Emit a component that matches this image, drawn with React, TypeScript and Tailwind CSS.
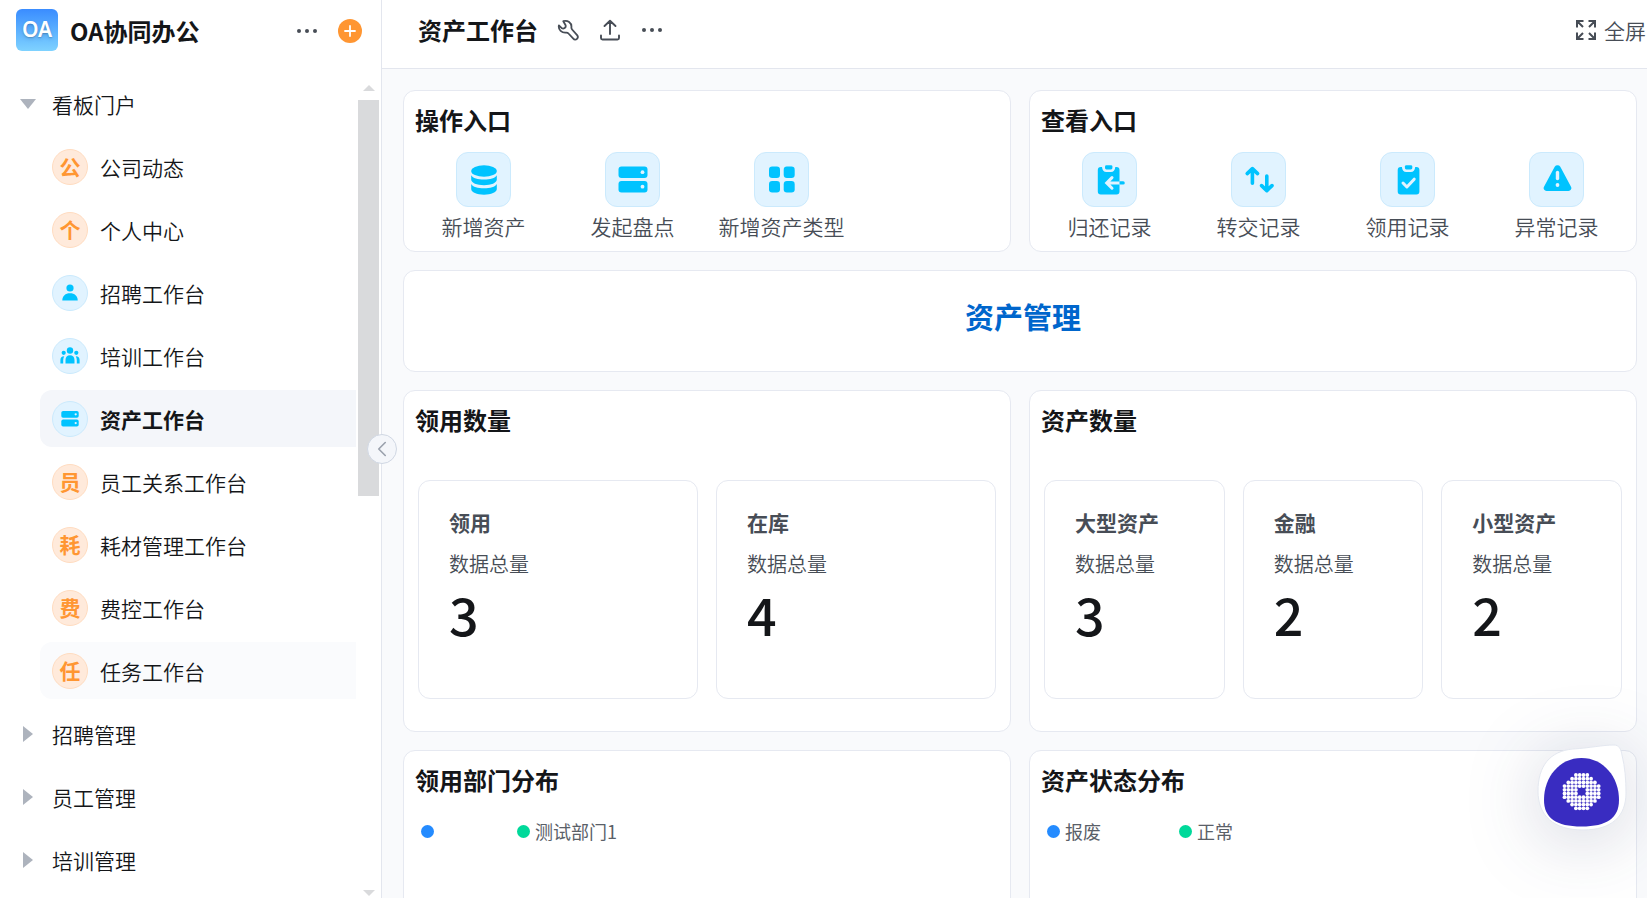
import React from 'react';
import { ChevronLeft } from 'lucide-react';

type IconProps = { className?: string };

const DatabaseIcon = ({ className }: IconProps) => (
  <svg viewBox="0 0 30 30" className={className} fill="currentColor" aria-hidden="true">
    <ellipse cx="15" cy="6" rx="12.8" ry="5.8" />
    <path d="M2.200 10.200c1.600 2.900 6.600 4.400 12.800 4.400s11.200-1.500 12.800-4.400v4.400c0 3.400-5.700 5.700-12.800 5.700S2.200 18 2.200 14.600z" />
    <path d="M2.200 18.900c1.600 2.900 6.600 4.400 12.800 4.400s11.200-1.500 12.800-4.400V24c0 3.400-5.700 5.700-12.800 5.700S2.200 27.400 2.200 24z" />
  </svg>
);

const ServerIcon = ({ className }: IconProps) => (
  <svg viewBox="0 0 30 30" className={className} aria-hidden="true">
    <rect x="0.500" y="1.500" width="29" height="11.500" rx="3" fill="currentColor" />
    <rect x="0.500" y="16" width="29" height="11.500" rx="3" fill="currentColor" />
    <circle cx="24.500" cy="7.200" r="1.900" fill="#e1f3ff" />
    <circle cx="24.500" cy="21.700" r="1.900" fill="#e1f3ff" />
  </svg>
);

const GridIcon = ({ className }: IconProps) => (
  <svg viewBox="0 0 30 30" className={className} fill="currentColor" aria-hidden="true">
    <rect x="2" y="1.500" width="11" height="11.500" rx="3.200" />
    <rect x="16.700" y="1.500" width="11" height="11.500" rx="3.200" />
    <rect x="2" y="16" width="11" height="11.500" rx="3.200" />
    <rect x="16.700" y="16" width="11" height="11.500" rx="3.200" />
  </svg>
);

const ReturnIcon = ({ className }: IconProps) => (
  <svg viewBox="0 0 30 30" className={className} aria-hidden="true">
    <path d="M5.800 2h1.200c.4 3.400 1.800 5 4.300 5h4.700c2.500 0 3.900-1.600 4.300-5h1.200a3 3 0 0 1 3 3v21.500a3 3 0 0 1-3 3H5.800a3 3 0 0 1-3-3V5a3 3 0 0 1 3-3z" fill="currentColor" />
    <rect x="10" y="0.200" width="7.400" height="4.200" rx="1.400" fill="currentColor" />
    <path d="M17 12.600l-5.300 5.300 5.300 5.300M12 17.900h12.500" fill="none" stroke="#e1f3ff" strokeWidth="3" strokeLinecap="round" />
    <path d="M24.500 16.200h3.600a1.700 1.700 0 0 1 0 3.400h-3.600z" fill="currentColor" />
  </svg>
);

const TransferIcon = ({ className }: IconProps) => (
  <svg viewBox="0 0 30 30" className={className} fill="none" stroke="currentColor" strokeWidth="3.600" strokeLinecap="round" strokeLinejoin="round" aria-hidden="true">
    <path d="M8.400 18.200V4M3.200 8.600l5.200-5 5.200 5" />
    <path d="M22.800 11v14M17.600 20.600l5.200 5 5.200-5" />
  </svg>
);

const ClaimIcon = ({ className }: IconProps) => (
  <svg viewBox="0 0 30 30" className={className} aria-hidden="true">
    <path d="M7.700 2h1.200c.4 3.400 1.800 5 4.300 5h4.700c2.500 0 3.900-1.600 4.300-5h1.200a3 3 0 0 1 3 3v21.500a3 3 0 0 1-3 3H7.700a3 3 0 0 1-3-3V5a3 3 0 0 1 3-3z" fill="currentColor" />
    <rect x="11.900" y="0.200" width="7.400" height="4.200" rx="1.400" fill="currentColor" />
    <path d="M10 18l3.900 4 7.300-7.800" fill="none" stroke="#e1f3ff" strokeWidth="3" strokeLinecap="round" strokeLinejoin="round" />
  </svg>
);

const WarningIcon = ({ className }: IconProps) => (
  <svg viewBox="0 0 30 30" className={className} aria-hidden="true">
    <path d="M12.700 1.700a3.400 3.400 0 0 1 5.600 0l10.700 20a2.900 2.900 0 0 1-2.500 4.300H4.500a2.900 2.900 0 0 1-2.500-4.300z" fill="currentColor" />
    <path d="M15.500 7.500v6" stroke="#e1f3ff" strokeWidth="3.400" strokeLinecap="round" />
    <circle cx="15.500" cy="20" r="1.900" fill="#e1f3ff" />
  </svg>
);

const PersonIcon = ({ className }: IconProps) => (
  <svg viewBox="0 0 20 20" className={className} fill="currentColor" aria-hidden="true">
    <circle cx="10" cy="5" r="3.600" />
    <path d="M2.300 17.500c0-4.500 3.100-7.200 7.700-7.200s7.700 2.700 7.700 7.200z" />
  </svg>
);

const PeopleIcon = ({ className }: IconProps) => (
  <svg viewBox="0 0 20 20" className={className} fill="currentColor" aria-hidden="true">
    <circle cx="10" cy="4.500" r="3.200" />
    <circle cx="3.700" cy="6.800" r="2.100" />
    <circle cx="16.300" cy="6.800" r="2.100" />
    <path d="M5.500 17.500V14c0-3 1.700-4.800 4.500-4.800s4.500 1.800 4.500 4.800v3.500z" />
    <path d="M.4 17.500V14c0-2.200 1.200-3.700 3.800-3.700-.7 1.200-1 2.500-1 4v3.200zM19.600 17.500V14c0-2.200-1.200-3.700-3.800-3.700.7 1.200 1 2.500 1 4v3.200z" />
  </svg>
);

const WrenchIcon = () => (
  <svg viewBox="0 0 22 22" className="size-[22px]" fill="none" stroke="currentColor" strokeWidth="1.800" strokeLinejoin="round" strokeLinecap="round" aria-hidden="true">
    <path d="M6.300 2.200C10.500.8 14.900 3.800 14.400 8.200c-.1 1 .1 1.600.7 2.300l5 5.600c1 1.200.9 2.700-.1 3.700-1.100 1.100-2.700 1.100-3.700-.1l-4.800-5.200c-.7-.8-1.400-1-2.500-.9C5 14 1 11 1.900 6.400L5 9.300c1.600 1 4.300-.8 3.600-3z" />
  </svg>
);

const UploadIcon = () => (
  <svg viewBox="0 0 22 22" className="size-[22px]" fill="none" stroke="currentColor" strokeWidth="1.900" strokeLinecap="round" strokeLinejoin="round" aria-hidden="true">
    <path d="M11 15V2M5.500 7L11 1.700 16.500 7M2 16.500v2.500a1.500 1.500 0 0 0 1.500 1.500h15a1.500 1.500 0 0 0 1.500-1.500v-2.500" />
  </svg>
);

const DotsIcon = () => (
  <svg viewBox="0 0 22 22" className="size-[22px]" fill="currentColor" aria-hidden="true">
    <circle cx="3" cy="11" r="2" />
    <circle cx="11" cy="11" r="2" />
    <circle cx="19" cy="11" r="2" />
  </svg>
);

const FullscreenIcon = () => (
  <svg viewBox="0 0 20 20" className="size-5" fill="none" stroke="currentColor" strokeWidth="2" aria-hidden="true">
    <path d="M1 7.500V1h6.500M1.500 1.500l5.500 5.500M12.500 1H19v6.500M18.500 1.500L13 7M1 12.500V19h6.500M1.500 18.500L7 13M12.500 19H19v-6.500M18.500 18.500L13 13" />
  </svg>
);

// dot rows of the ring inside the assistant bubble, as [first, last] column
const dotRows = [[3, 6], [2, 7], [1, 8], [0, 9], [0, 9], [0, 9], [0, 9], [1, 8], [2, 7], [3, 6]];

const AssistantIcon = () => (
  <svg viewBox="0 0 92 90" className="h-[90px] w-[92px] drop-shadow-[0_10px_36px_rgba(30,40,90,0.2)]" aria-hidden="true">
    <path d="M37 5C54 4 66 1 78 1c5 0 7 4 8 10 3 12 4 25 4 38 0 23-14 37-43 37S2 72 2 47C2 22 14 7 37 5z" fill="#fff" stroke="#e3e7ef" strokeWidth="1" />
    <path d="M45.500 14c22 0 37.500 19 37.500 42 0 18-12 26.500-37.500 26.500S8 74 8 56c0-23 15.500-42 37.500-42z" fill="#392cc1" />
    {dotRows.map(([from, to], row) =>
      Array.from({ length: to - from + 1 }, (_, i) => from + i)
        .filter((col) => !((row === 4 || row === 5) && (col === 4 || col === 5)))
        .map((col) => <circle key={`${row}-${col}`} cx={28.500 + col * 3.800} cy={31 + row * 3.700} r="1.900" fill="#fff" />)
    )}
  </svg>
);

type MenuItem = { name: string; char?: string; icon?: React.FC<IconProps>; state?: 'active' | 'hover' };

const menuItems: MenuItem[] = [
  { name: '公司动态', char: '公' },
  { name: '个人中心', char: '个' },
  { name: '招聘工作台', icon: PersonIcon },
  { name: '培训工作台', icon: PeopleIcon },
  { name: '资产工作台', icon: ServerIcon, state: 'active' },
  { name: '员工关系工作台', char: '员' },
  { name: '耗材管理工作台', char: '耗' },
  { name: '费控工作台', char: '费' },
  { name: '任务工作台', char: '任', state: 'hover' },
];

const groups = ['招聘管理', '员工管理', '培训管理'];

const operations = [
  { name: '新增资产', icon: DatabaseIcon },
  { name: '发起盘点', icon: ServerIcon },
  { name: '新增资产类型', icon: GridIcon },
];

const records = [
  { name: '归还记录', icon: ReturnIcon },
  { name: '转交记录', icon: TransferIcon },
  { name: '领用记录', icon: ClaimIcon },
  { name: '异常记录', icon: WarningIcon },
];

const stateClass = {
  active: 'bg-[#f4f6fa] font-bold',
  hover: 'bg-[#fafbfd] font-[350]',
};

function MenuLink({ name, char, icon: Icon, state }: MenuItem) {
  return (
    <a href="#" className={`ml-10 flex h-[57px] items-center gap-3 rounded-l-xl pl-3 ${state ? stateClass[state] : 'font-[350]'}`}>
      {Icon ? (
        <span className="flex size-9 items-center justify-center rounded-full border border-[#cbeafd] bg-[#e1f3ff] text-[#00c3ff]">
          <Icon className={Icon === ServerIcon ? 'size-[18px]' : 'size-5'} />
        </span>
      ) : (
        <span className="flex size-9 items-center justify-center rounded-full border border-[#ffdcc0] bg-[#ffeadb] text-[21px] leading-none font-bold text-[#ff9632]">
          {char}
        </span>
      )}
      <span className="pt-0.5">{name}</span>
    </a>
  );
}

function Sidebar() {
  return (
    <aside className="relative flex w-[382px] shrink-0 flex-col border-r border-[#e3e6ee] bg-white">
      <div className="flex h-[69px] shrink-0 items-center pr-[19px] pb-2 pl-4">
        <span className="mb-px flex size-[42px] items-center justify-center rounded-md bg-linear-to-b from-[#3a8cff] to-[#7fd2ff] font-['Noto_Sans',sans-serif] text-[21px] font-semibold text-white text-shadow-md">
          OA
        </span>
        <h1 className="pl-3 text-2xl font-bold">OA协同办公</h1>
        <button type="button" aria-label="更多" className="ml-auto text-[#474d56]">
          <DotsIcon />
        </button>
        <button type="button" aria-label="新建" className="ml-5 flex size-6 items-center justify-center rounded-full bg-[#ff9632] text-white">
          <svg viewBox="0 0 12 12" className="size-3" stroke="currentColor" strokeWidth="1.800" strokeLinecap="round" aria-hidden="true">
            <path d="M6 1v10M1 6h10" />
          </svg>
        </button>
      </div>

      <div className="flex min-h-0 flex-1">
        <nav className="flex flex-1 flex-col gap-1.5 overflow-hidden pt-1.5 pr-0.5 text-[21px]">
          <button type="button" aria-expanded="true" className="flex h-[57px] shrink-0 items-center gap-4 pl-5 text-left font-[350]">
            <svg viewBox="0 0 16 10" className="h-2.5 w-4 fill-[#adb3bd]" aria-hidden="true"><path d="M0 0h16L8 10z" /></svg>
            <span className="pt-0.5">看板门户</span>
          </button>
          {menuItems.map((item) => <MenuLink key={item.name} {...item} />)}
          {groups.map((name) => (
            <button key={name} type="button" aria-expanded="false" className="flex h-[57px] shrink-0 items-center gap-[19px] pl-[23px] text-left font-[350]">
              <svg viewBox="0 0 10 16" className="h-4 w-2.5 fill-[#adb3bd]" aria-hidden="true"><path d="M0 0v16l10-8z" /></svg>
              <span className="pt-0.5">{name}</span>
            </button>
          ))}
        </nav>
        <div className="flex w-[23px] flex-col items-center pt-4 pr-0.5">
          <svg viewBox="0 0 12 6" className="h-1.5 w-3 fill-[#d9dadc]" aria-hidden="true"><path d="M0 6h12L6 0z" /></svg>
          <div className="mt-[9px] h-[396px] w-[21px] bg-[#d9dadc]" />
          <svg viewBox="0 0 12 6" className="mt-auto mb-0.5 h-1.5 w-3 fill-[#d9dadc]" aria-hidden="true"><path d="M0 0h12L6 6z" /></svg>
        </div>
      </div>

      <button type="button" aria-label="收起菜单" className="absolute top-1/2 -right-4 -mt-[15px] flex size-[30px] items-center justify-center rounded-full border border-[#d0d7e3] bg-[#f4f6fa] text-[#9aa1ad]">
        <ChevronLeft size={26} strokeWidth={1.500} />
      </button>
    </aside>
  );
}

function Card({ title, className = '', children }: { title: string; className?: string; children: React.ReactNode }) {
  return (
    <section className={`rounded-xl border border-[#e6e9f1] bg-white ${className}`}>
      <h2 className="pt-[11px] pl-[11px] text-2xl leading-9 font-bold">{title}</h2>
      {children}
    </section>
  );
}

function Shortcuts({ items }: { items: { name: string; icon: React.FC<IconProps> }[] }) {
  return (
    <div className="grid grid-cols-4 px-[5px] pt-3.5">
      {items.map(({ name, icon: Icon }) => (
        <a key={name} href="#" className="flex flex-col items-center gap-[5px]">
          <span className="flex size-[55px] items-center justify-center rounded-xl border border-[#cbeafd] bg-[#e1f3ff] text-[#00c3ff]">
            <Icon className="size-[30px]" />
          </span>
          <span className="text-[21px] leading-7 font-[350] whitespace-nowrap text-[#474d56]">{name}</span>
        </a>
      ))}
    </div>
  );
}

function Stat({ name, value }: { name: string; value: number }) {
  return (
    <div className="h-[219px] flex-1 rounded-xl border border-[#e6e9f1] pt-[25px] pl-[30px]">
      <h3 className="text-[21px] leading-8 font-bold text-[#474d56]">{name}</h3>
      <p className="pt-2.5 text-xl leading-8 font-[350] text-[#474d56]">数据总量</p>
      <p className="pt-1 text-[52px] leading-[60px] font-medium">{value}</p>
    </div>
  );
}

function Legend({ labels }: { labels: string[] }) {
  return (
    <ul className="flex gap-[78px] pt-[21px] pl-[17px] text-lg leading-6 text-[#5a6068]">
      {labels.map((label, i) => (
        <li key={i} className="flex h-6 items-center gap-[5px]">
          <span className={`size-[13px] rounded-full ${i === 0 ? 'bg-[#248bff]' : 'bg-[#00d99a]'}`} />
          <span>{label}</span>
        </li>
      ))}
    </ul>
  );
}

export default function App() {
  return (
    <div className="flex h-screen overflow-hidden bg-[#f9fafc] font-['Noto_Sans_CJK_SC',sans-serif] text-[#141619]">
      <Sidebar />

      <main className="flex min-w-0 flex-1 flex-col">
        <header className="flex h-[69px] shrink-0 items-center border-b border-[#e3e6ee] bg-white pr-px pb-2 pl-9 text-[#474d56]">
          <h1 className="text-2xl font-bold text-[#141619]">资产工作台</h1>
          <button type="button" aria-label="设置" className="ml-[19px]"><WrenchIcon /></button>
          <button type="button" aria-label="分享" className="ml-5"><UploadIcon /></button>
          <button type="button" aria-label="更多" className="ml-5"><DotsIcon /></button>
          <button type="button" className="ml-auto flex items-center gap-2 text-[21px] font-[350]">
            <FullscreenIcon />
            <span className="pt-0.5">全屏</span>
          </button>
        </header>

        <div className="grid grid-cols-2 gap-[18px] pt-[21px] pr-2.5 pl-[21px]">
          <Card title="操作入口" className="h-[162px]">
            <Shortcuts items={operations} />
          </Card>
          <Card title="查看入口" className="h-[162px]">
            <Shortcuts items={records} />
          </Card>

          <section className="col-span-2 flex h-[102px] items-center justify-center rounded-xl border border-[#e6e9f1] bg-white">
            <h2 className="pb-2 pl-1.5 text-[29px] font-bold text-[#0066cc]">资产管理</h2>
          </section>

          <Card title="领用数量" className="h-[342px]">
            <div className="flex gap-[18px] px-3.5 pt-[42px]">
              <Stat name="领用" value={3} />
              <Stat name="在库" value={4} />
            </div>
          </Card>
          <Card title="资产数量" className="h-[342px]">
            <div className="flex gap-[18px] px-3.5 pt-[42px]">
              <Stat name="大型资产" value={3} />
              <Stat name="金融" value={2} />
              <Stat name="小型资产" value={2} />
            </div>
          </Card>

          <Card title="领用部门分布" className="h-[342px]">
            <Legend labels={['', '测试部门1']} />
          </Card>
          <Card title="资产状态分布" className="h-[342px]">
            <Legend labels={['报废', '正常']} />
          </Card>
        </div>
      </main>

      <button type="button" aria-label="智能助手" className="fixed right-[19px] bottom-16">
        <AssistantIcon />
      </button>
    </div>
  );
}
